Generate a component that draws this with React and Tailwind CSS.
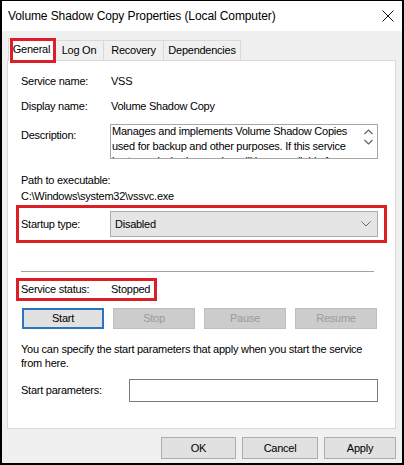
import React from "react";

function Btn({ children, className = "" }) {
  return (
    <div className={"flex items-center justify-center " + className}>{children}</div>
  );
}

export default function App() {
  return (
    <div className="w-[404px] h-[465px] bg-[#f0f0f0] border-l-2 border-r-2 border-b-2 border-t border-black flex flex-col font-['Liberation_Sans',Arial,sans-serif] text-[11px] tracking-[-0.25px] text-black leading-none overflow-hidden">
      {/* Title bar */}
      <div className="h-[30px] bg-white flex items-center pl-[6px] pr-[8px] shrink-0">
        <span className="flex-1 text-[12px] tracking-[-0.1px]">Volume Shadow Copy Properties (Local Computer)</span>
        <svg width="12" height="12" viewBox="0 0 12 12">
          <path d="M0.5 0.5 L11.5 11.5 M11.5 0.5 L0.5 11.5" stroke="#111" strokeWidth="1" fill="none" />
        </svg>
      </div>

      {/* Body */}
      <div className="flex flex-col pl-[5px] pr-[6px] pt-[7px]">
        {/* Tabs */}
        <div className="flex items-end h-[22px] pl-[1px]">
          <div className="relative z-10 h-[23px] mb-[-1px] w-[47px] bg-white border-l border-t border-r border-[#d9d9d9] flex items-center justify-center pb-[2px]">
            General
            <div className="absolute left-[1px] right-[-2px] top-[-1px] bottom-[-2px] border-[3px] border-[#dc1f26]" />
          </div>
          <div className="h-[20px] w-[49px] bg-[#f0f0f0] border-t border-r border-[#d9d9d9] flex items-center justify-center">
            Log On
          </div>
          <div className="h-[20px] w-[60px] bg-[#f0f0f0] border-t border-r border-[#d9d9d9] flex items-center justify-center">
            Recovery
          </div>
          <div className="h-[20px] w-[77px] bg-[#f0f0f0] border-t border-r border-[#d9d9d9] flex items-center justify-center">
            Dependencies
          </div>
        </div>

        {/* Panel */}
        <div className="w-[389px] h-[369px] bg-white border border-[#d9d9d9] flex flex-col pl-[13px] pt-[13px]">
          <div className="flex items-center h-[15px]">
            <span className="w-[90px]">Service name:</span>
            <span>VSS</span>
          </div>
          <div className="flex items-center h-[15px] mt-[10px]">
            <span className="w-[90px]">Display name:</span>
            <span>Volume Shadow Copy</span>
          </div>
          <div className="flex items-start mt-[10px]">
            <span className="w-[89px] mt-[6px]">Description:</span>
            <div className="w-[268px] h-[35px] border border-[#a6a6a6] flex overflow-hidden">
              <div className="flex-1 pl-[1px] pr-[5px] leading-[15px] -mt-[1px]">
                Manages and implements Volume Shadow Copies used for backup and other purposes. If this service is stopped, shadow copies will be unavailable for backup.
              </div>
              <div className="w-[18px] flex flex-col items-center pt-[4px] gap-[4px] shrink-0">
                <svg width="9" height="6" viewBox="0 0 9 6">
                  <path d="M0.5 5 L4.5 1 L8.5 5" stroke="#606060" strokeWidth="1.2" fill="none" />
                </svg>
                <svg width="9" height="6" viewBox="0 0 9 6">
                  <path d="M0.5 1 L4.5 5 L8.5 1" stroke="#606060" strokeWidth="1.2" fill="none" />
                </svg>
              </div>
            </div>
          </div>
          <div className="flex flex-col mt-[13px]">
            <div className="h-[16px] flex items-center">Path to executable:</div>
            <div className="h-[16px] flex items-center">C:\Windows\system32\vssvc.exe</div>
          </div>

          {/* Startup type (highlighted) */}
          <div className="-ml-[5px] mt-[1px] w-[371px] border-[3px] border-[#dc1f26] flex items-center pl-[2px] py-[3px]">
            <span className="w-[89px]">Startup type:</span>
            <div className="w-[268px] h-[26px] bg-[#e5e5e5] border border-[#adadad] flex items-center pl-[4px] pr-[6px]">
              <span className="flex-1">Disabled</span>
              <svg width="10" height="6" viewBox="0 0 10 6">
                <path d="M0.5 0.5 L5 5 L9.5 0.5" stroke="#6a6a6a" strokeWidth="1" fill="none" />
              </svg>
            </div>
          </div>

          <div className="mt-[28px] w-[353px] h-[1px] bg-[#a0a0a0]" />

          {/* Service status (highlighted) */}
          <div className="-ml-[5px] mt-[6px] w-[141px] h-[23px] border-[3px] border-[#dc1f26] flex items-center pl-[2px]">
            <span className="w-[90px]">Service status:</span>
            <span>Stopped</span>
          </div>

          <div className="flex ml-[1px] mt-[7px] gap-[9px]">
            <Btn className="w-[82px] h-[21px] bg-[#e1e1e1] border-2 border-[#2b74bf]">Start</Btn>
            <Btn className="w-[82px] h-[21px] bg-[#cccccc] border border-[#bfbfbf] text-[#9b9b9b]">Stop</Btn>
            <Btn className="w-[82px] h-[21px] bg-[#cccccc] border border-[#bfbfbf] text-[#9b9b9b]">Pause</Btn>
            <Btn className="w-[82px] h-[21px] bg-[#cccccc] border border-[#bfbfbf] text-[#9b9b9b]">Resume</Btn>
          </div>

          <div className="mt-[13px] w-[360px] leading-[14px]">
            You can specify the start parameters that apply when you start the service from here.
          </div>

          <div className="flex items-center mt-[9px]">
            <span className="w-[108px]">Start parameters:</span>
            <div className="w-[249px] h-[23px] bg-white border border-[#7a7a7a]" />
          </div>
        </div>

        {/* Footer */}
        <div className="flex justify-end gap-[6px] mt-[8px]">
          <Btn className="w-[75px] h-[22px] bg-[#e1e1e1] border border-[#adadad]">OK</Btn>
          <Btn className="w-[76px] h-[22px] bg-[#e1e1e1] border border-[#adadad]">Cancel</Btn>
          <Btn className="w-[72px] h-[22px] bg-[#e1e1e1] border border-[#adadad]">Apply</Btn>
        </div>
      </div>
    </div>
  );
}
